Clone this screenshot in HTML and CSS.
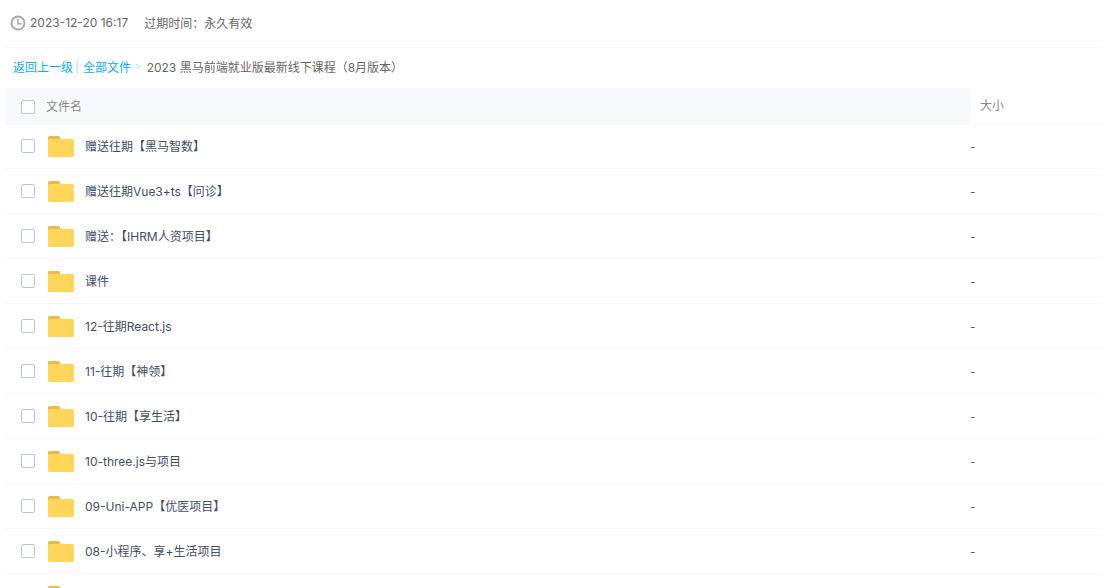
FILE: index.html
```html
<!DOCTYPE html>
<html lang="zh-CN">
<head>
<meta charset="utf-8">
<title>文件列表</title>
<link rel="stylesheet" href="styles.css">
</head>
<body>
<svg class="defs" width="0" height="0" aria-hidden="true">
  <symbol id="folder" viewBox="0 0 26 21">
    <path d="M0 1.500A1.500 1.500 0 0 1 1.500 0h9A1.500 1.500 0 0 1 12 1.500V5H0z" fill="#e9bb4b"/>
    <rect x="0" y="3" width="26" height="18" rx="1.500" fill="#ffd659"/>
  </symbol>
</svg>
<main class="page">
  <div class="meta">
    <svg class="clock" width="16" height="16" viewBox="0 0 16 16" aria-hidden="true">
      <circle cx="8" cy="8" r="6.500" fill="none" stroke="#a9a9a9" stroke-width="2"/>
      <path d="M8 4V8.700H11.500" fill="none" stroke="#a9a9a9" stroke-width="1.500"/>
    </svg>
    <span class="date">2023-12-20 16:17</span>
    <span>过期时间：永久有效</span>
  </div>
  <nav class="crumbs">
    <a class="link">返回上一级</a><span class="sep">|</span><a class="link">全部文件</a><span class="arrow">&gt;</span><span>2023 黑马前端就业版最新线下课程（8月版本）</span>
  </nav>
  <div class="head">
    <div class="head-name"><span class="check"></span><span class="head-label">文件名</span></div>
    <div class="head-size">大小</div>
  </div>
  <ul class="list">
    <li class="row"><span class="check"></span><svg class="folder"><use href="#folder"/></svg><span class="name">赠送往期【黑马智数】</span><span class="size">-</span></li>
    <li class="row"><span class="check"></span><svg class="folder"><use href="#folder"/></svg><span class="name">赠送往期Vue3+ts【问诊】</span><span class="size">-</span></li>
    <li class="row"><span class="check"></span><svg class="folder"><use href="#folder"/></svg><span class="name">赠送：【IHRM人资项目】</span><span class="size">-</span></li>
    <li class="row"><span class="check"></span><svg class="folder"><use href="#folder"/></svg><span class="name">课件</span><span class="size">-</span></li>
    <li class="row"><span class="check"></span><svg class="folder"><use href="#folder"/></svg><span class="name">12-往期React.js</span><span class="size">-</span></li>
    <li class="row"><span class="check"></span><svg class="folder"><use href="#folder"/></svg><span class="name">11-往期【神领】</span><span class="size">-</span></li>
    <li class="row"><span class="check"></span><svg class="folder"><use href="#folder"/></svg><span class="name">10-往期【享生活】</span><span class="size">-</span></li>
    <li class="row"><span class="check"></span><svg class="folder"><use href="#folder"/></svg><span class="name">10-three.js与项目</span><span class="size">-</span></li>
    <li class="row"><span class="check"></span><svg class="folder"><use href="#folder"/></svg><span class="name">09-Uni-APP【优医项目】</span><span class="size">-</span></li>
    <li class="row"><span class="check"></span><svg class="folder"><use href="#folder"/></svg><span class="name">08-小程序、享+生活项目</span><span class="size">-</span></li>
    <li class="row"><span class="check"></span><svg class="folder"><use href="#folder"/></svg><span class="name"></span><span class="size"></span></li>
  </ul>
</main>
</body>
</html>
```
FILE: styles.css
```css
* { box-sizing: border-box; }
html, body { margin: 0; height: 100%; overflow: hidden; background: #fff; }
body {
  font-family: Inter, "Noto Sans CJK SC", sans-serif;
  font-size: 12px;
  color: #666;
}
.defs { position: absolute; }
.page { padding-left: 5px; }
.meta {
  height: 48px;
  display: flex;
  align-items: center;
  padding: 0 0 3px 5px;
  border-bottom: 1px solid #f4f6f9;
}
.clock { margin: 2px 4px 0 0; }
.date { margin-right: 16px; }
.crumbs {
  height: 40px;
  display: flex;
  align-items: center;
  padding: 0 0 4px 8px;
  white-space: pre;
}
.link { color: #09aaff; }
.sep { color: #c4d8f4; margin: 0 4px 0 2px; }
.arrow { color: #c4d8f4; margin: 0 5px 0 4px; font-size: 10px; }
.head { height: 37px; display: flex; border-bottom: 1px solid #f4f6f9; }
.head-name {
  width: 966px;
  height: 36px;
  background: #f7f9fd;
  display: flex;
  align-items: center;
  padding: 1px 0 0 16px;
  color: #888;
}
.head-name .check { margin-right: 11px; }
.head-label { margin-bottom: 2px; }
.head-size { padding: 0 0 0 9px; line-height: 36px; color: #888; }
.check {
  width: 14px;
  height: 14px;
  flex: none;
  background: #fff;
  border: 1px solid #b9c6d6;
  border-radius: 2px;
}
.list { margin: -1px 0 0; padding: 0; list-style: none; }
.row {
  height: 45px;
  display: flex;
  align-items: center;
  padding: 0 0 0 16px;
  border-bottom: 1px solid #f4f6f9;
  color: #424e67;
}
.folder { width: 26px; height: 21px; margin-left: 13px; flex: none; }
.name { width: 885px; margin: 0 0 2px 11px; }
.size { color: #666; }
```
